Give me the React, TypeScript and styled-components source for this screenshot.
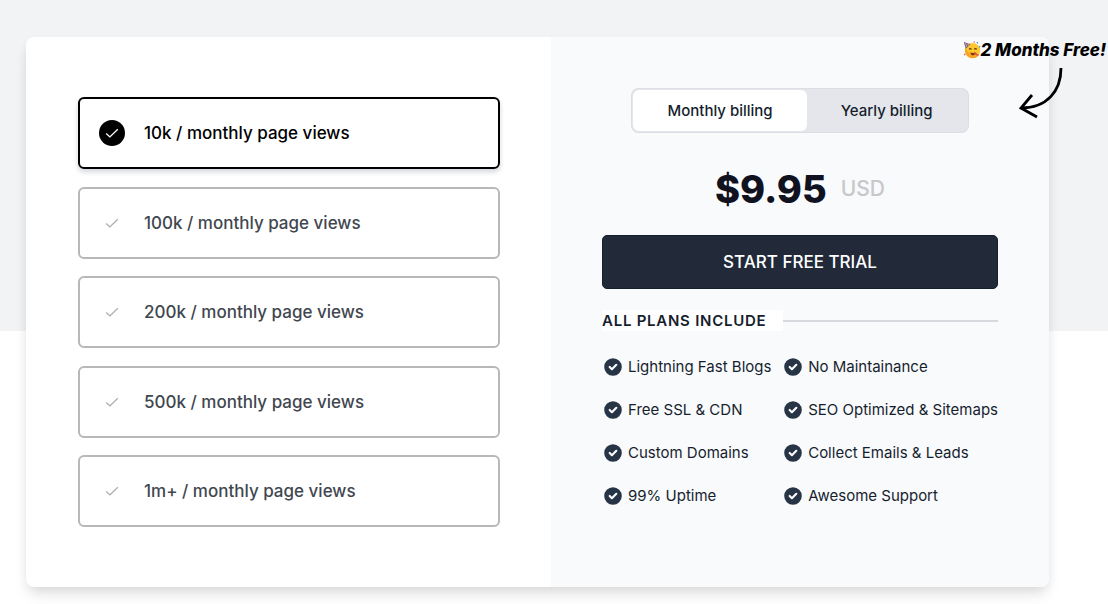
import React, { useState } from "react";
import styled, { createGlobalStyle } from "styled-components";

const GlobalStyle = createGlobalStyle`
  *, *::before, *::after { box-sizing: border-box; }
  body {
    margin: 0;
    background: #fff;
    color: #161e2e;
    font-family: Inter, "Liberation Sans", sans-serif;
    overflow-x: hidden;
  }
  button { font: inherit; color: inherit; cursor: pointer; }
`;

const Page = styled.main`
  padding: 37px 59px 17px 26px;
  background: linear-gradient(#f2f3f5 331px, #fff 331px);
`;

const Card = styled.section`
  position: relative;
  display: grid;
  grid-template-columns: minmax(0, 525fr) minmax(0, 498fr);
  min-height: 550px;
  border-radius: 8px;
  background: #fff;
  box-shadow: 0 10px 15px -3px rgba(0, 0, 0, 0.1), 0 4px 12px -2px rgba(0, 0, 0, 0.08);
`;

const Tiers = styled.fieldset`
  display: flex;
  flex-direction: column;
  justify-content: space-between;
  gap: 16px;
  min-width: 0;
  margin: 0;
  padding: 60px 51px 60px 52px;
  border: 0;
`;

const Tier = styled.label<{ $active: boolean }>`
  display: flex;
  align-items: center;
  gap: 19px;
  height: 72px;
  padding: 0 19px;
  border: 2px solid ${(p) => (p.$active ? "#000" : "#b8b8b8")};
  border-radius: 6px;
  color: ${(p) => (p.$active ? "#000" : "#41474f")};
  box-shadow: ${(p) => (p.$active ? "0 3px 5px rgba(30, 50, 80, 0.2)" : "none")};
  font-size: 17px;
  line-height: 24px;
  font-weight: 500;
  cursor: pointer;
`;

const TierRadio = styled.input`
  position: absolute;
  opacity: 0;
  pointer-events: none;
`;

const Tick = styled.span<{ $active: boolean }>`
  display: flex;
  align-items: center;
  justify-content: center;
  width: 26px;
  height: 26px;
  border-radius: 50%;
  color: ${(p) => (p.$active ? "#fff" : "#adadad")};
  background: ${(p) => (p.$active ? "#000" : "transparent")};
`;

const Plan = styled.div`
  display: flex;
  flex-direction: column;
  padding: 51px;
  border-radius: 0 8px 8px 0;
  background: #f9fafc;
`;

const Switch = styled.div`
  display: flex;
  align-self: center;
  height: 45px;
  padding: 2px;
  border-radius: 8px;
  background: #e4e6eb;
  box-shadow: inset 0 0 0 1px #dcdee3;
`;

const SwitchButton = styled.button<{ $active: boolean }>`
  padding: 0 34px;
  border: 0;
  border-radius: 6px;
  background: ${(p) => (p.$active ? "#fff" : "transparent")};
  font-size: 15px;
  line-height: 20px;
  font-weight: 500;
  white-space: nowrap;
`;

const Price = styled.p`
  display: flex;
  align-items: center;
  justify-content: center;
  gap: 14px;
  margin: 33px 0 0;
  font-size: 38px;
  line-height: 46px;
  font-weight: 800;
  color: #10131f;
`;

const Currency = styled.span`
  font-size: 21px;
  font-weight: 500;
  color: #c6c8cb;
`;

const TrialButton = styled.button`
  height: 54px;
  margin-top: 23px;
  border: 1px solid #161d2c;
  border-radius: 5px;
  background: #222a39;
  color: #fff;
  font-size: 17px;
  line-height: 24px;
  font-weight: 500;
`;

const Divider = styled.div`
  display: flex;
  align-items: center;
  margin-top: 21px;

  &::after {
    content: "";
    flex: 1;
    height: 2px;
    background: #d6d9de;
  }
`;

const DividerTitle = styled.h2`
  margin: 0;
  padding-right: 17px;
  background: #fff;
  font-size: 15px;
  line-height: 21px;
  font-weight: 600;
  letter-spacing: 0.05em;
`;

const Features = styled.ul`
  display: grid;
  grid-template-columns: auto auto;
  justify-content: space-between;
  row-gap: 21px;
  margin: 25px 0 0;
  padding: 0;
  list-style: none;
`;

const Feature = styled.li`
  display: flex;
  align-items: center;
  gap: 4px;
  font-size: 15px;
  line-height: 22px;
  white-space: nowrap;
`;

const Promo = styled.div`
  position: absolute;
  top: 1px;
  right: -57px;
  display: flex;
  flex-direction: column;
  align-items: flex-end;
  pointer-events: none;
`;

const PromoText = styled.strong`
  display: flex;
  align-items: center;
  color: #000;
  font-size: 17px;
  line-height: 24px;
  font-weight: 800;
  font-style: italic;
  white-space: nowrap;
`;

const Arrow = styled.svg`
  margin: 3px 41px 0 0;
`;

function ThinCheck() {
  return (
    <svg width="14" height="14" viewBox="0 0 14 14" fill="none" stroke="currentColor" strokeWidth="1.3" aria-hidden="true">
      <path d="M1.2 7.6 4.900 10.900 12.800 3.200" />
    </svg>
  );
}

function CheckBadge() {
  return (
    <svg width="22" height="22" viewBox="0 0 20 20" fill="#273446" aria-hidden="true">
      <path
        fillRule="evenodd"
        clipRule="evenodd"
        d="M10 18a8 8 0 100-16 8 8 0 000 16zm3.707-9.293a1 1 0 00-1.414-1.414L9 10.586 7.707 9.293a1 1 0 00-1.414 1.414l2 2a1 1 0 001.414 0l4-4z"
      />
    </svg>
  );
}

function PartyFace() {
  return (
    <svg width="18" height="18" viewBox="0 0 18 18" aria-hidden="true">
      <circle cx="9.6" cy="9.6" r="7.6" fill="#fdc92f" />
      <path d="M2.600 6.500A7.600 7.600 0 0 0 9.600 17.200a7.600 7.600 0 0 0 6.400-3.500C11 15.600 5 13.500 2.600 6.500z" fill="#f5a623" />
      <path d="M.8 1 7.500 3.200 2.800 7.800z" fill="#6b55a8" />
      <path d="m2.600 2.300 1.200 3.600M4.900 2.700l.6 1.900" stroke="#f2bd4a" strokeWidth="1" />
      <path d="M6 8.300q1.400-1.500 2.500 0M11.200 8.300q1.400-1.500 2.500 0" fill="none" stroke="#6b3d12" strokeWidth="1.200" />
      <path d="M7.200 11.200q3 1.600 5.400-.3-.4 3.400-2.700 3.400-2 0-2.700-3.100z" fill="#7c3015" />
      <path d="m11 12.200 4.400 2" stroke="#e34c3c" strokeWidth="1.600" />
      <path d="m14 1 .8 1.500M17 5.200l-.8 1.300" stroke="#4f8fd6" strokeWidth="1.300" />
      <path d="m11 .5.500 1M1.200 12.800l1 1.300" stroke="#e45d52" strokeWidth="1.300" />
    </svg>
  );
}

const tiers = ["10k", "100k", "200k", "500k", "1m+"];
const features = [
  "Lightning Fast Blogs",
  "No Maintainance",
  "Free SSL & CDN",
  "SEO Optimized & Sitemaps",
  "Custom Domains",
  "Collect Emails & Leads",
  "99% Uptime",
  "Awesome Support",
];

export default function App() {
  const [tier, setTier] = useState("10k");
  const [billing, setBilling] = useState("Monthly");

  return (
    <>
      <GlobalStyle />
      <Page>
        <Card>
          <Tiers aria-label="Monthly page views">
            {tiers.map((t) => (
              <Tier key={t} $active={t === tier}>
                <TierRadio type="radio" name="tier" value={t} checked={t === tier} onChange={() => setTier(t)} />
                <Tick $active={t === tier}>
                  <ThinCheck />
                </Tick>
                {t} / monthly page views
              </Tier>
            ))}
          </Tiers>
          <Plan>
            <Switch>
              {["Monthly", "Yearly"].map((b) => (
                <SwitchButton key={b} type="button" $active={b === billing} aria-pressed={b === billing} onClick={() => setBilling(b)}>
                  {b} billing
                </SwitchButton>
              ))}
            </Switch>
            <Price>
              $9.95 <Currency>USD</Currency>
            </Price>
            <TrialButton type="button">START FREE TRIAL</TrialButton>
            <Divider>
              <DividerTitle>ALL PLANS INCLUDE</DividerTitle>
            </Divider>
            <Features>
              {features.map((f) => (
                <Feature key={f}>
                  <CheckBadge />
                  {f}
                </Feature>
              ))}
            </Features>
          </Plan>
          <Promo>
            <PromoText>
              <PartyFace />2 Months Free!
            </PromoText>
            <Arrow width="48" height="56" viewBox="0 0 48 56" fill="none" stroke="#000" strokeWidth="2.8" aria-hidden="true">
              <path d="M44 3C44 26 30 43 4 43" />
              <path d="M15 30 4 43l16 9" />
            </Arrow>
          </Promo>
        </Card>
      </Page>
    </>
  );
}
